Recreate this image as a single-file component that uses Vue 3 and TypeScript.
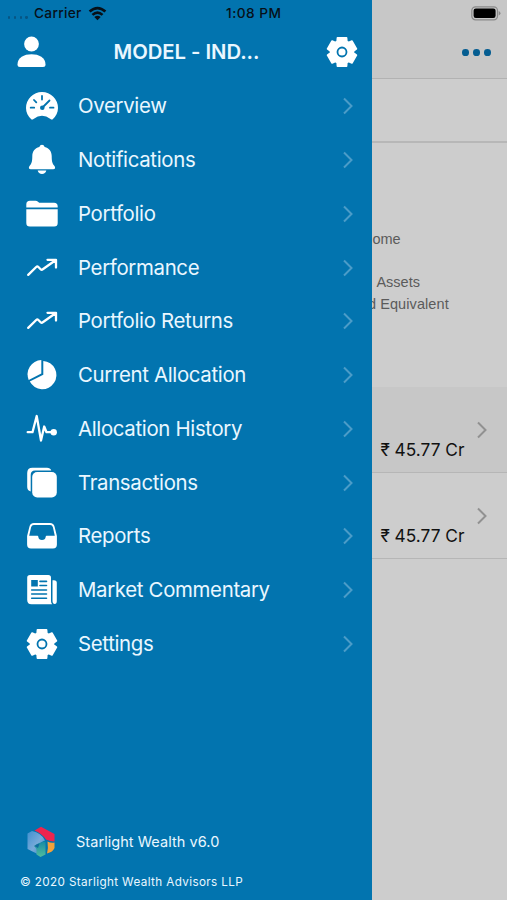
<script setup lang="ts">
type IconName = 'gauge' | 'bell' | 'folder' | 'trend' | 'pie' | 'pulse' | 'copy' | 'tray' | 'news' | 'gear'

interface MenuItem {
  label: string
  icon: IconName
}

const items: MenuItem[] = [
  { label: 'Overview', icon: 'gauge' },
  { label: 'Notifications', icon: 'bell' },
  { label: 'Portfolio', icon: 'folder' },
  { label: 'Performance', icon: 'trend' },
  { label: 'Portfolio Returns', icon: 'trend' },
  { label: 'Current Allocation', icon: 'pie' },
  { label: 'Allocation History', icon: 'pulse' },
  { label: 'Transactions', icon: 'copy' },
  { label: 'Reports', icon: 'tray' },
  { label: 'Market Commentary', icon: 'news' },
  { label: 'Settings', icon: 'gear' },
]

const amounts: string[] = ['₹ 45.77 Cr', '₹ 45.77 Cr']

// Six-toothed gear outline centred in a 32 x 32 box.
function gearPath(): string {
  const points: string[] = []
  for (let tooth = 0; tooth < 6; tooth++) {
    const corners: [number, number][] = [[-25, 11.6], [-18, 14.8], [18, 14.8], [25, 11.6]]
    for (const [offset, radius] of corners) {
      const a = ((tooth * 60 + offset - 90) * Math.PI) / 180
      points.push(`${(16 + radius * Math.cos(a)).toFixed(2)} ${(16 + radius * Math.sin(a)).toFixed(2)}`)
    }
  }
  return `M${points.join('L')}Z`
}
const gear = gearPath()
</script>

<template>
  <div class="screen">
    <aside class="drawer">
      <header class="profile">
        <svg class="person" viewBox="0 0 30 32">
          <circle cx="14.5" cy="8" r="7.4" />
          <path d="M.5 28.5C.5 21.500 7 18.300 14.500 18.300S28.500 21.500 28.500 28.500Q28.500 31 26 31H3Q.5 31 .5 28.500Z" />
        </svg>
        <h1>MODEL - IND...</h1>
        <svg class="icon" viewBox="0 0 32 32">
          <path :d="gear" class="rounded" />
          <circle cx="16" cy="16" r="4.5" class="cut-line" />
        </svg>
      </header>

      <nav>
        <a v-for="item in items" :key="item.label" class="item">
          <svg class="icon" viewBox="0 0 32 32">
            <template v-if="item.icon === 'gauge'">
              <path d="M5.500 29.500C2 26.500 0 22.600 0 18A16 16 0 0 1 32 18C32 22.600 30 26.500 26.500 29.500Q25.500 29.900 24.500 29Q16 22.500 7.500 29Q6.500 29.900 5.500 29.500Z" />
              <path class="cut-line" d="M16 6V9.500M8 10L10.300 12.400M4.700 17.700H8.200M24 17.700H27.500M17 17L23.500 10.500" />
              <circle class="cut" cx="16.300" cy="17.800" r="2.300" />
            </template>
            <template v-else-if="item.icon === 'bell'">
              <path d="M16 .7Q17.900 .7 18.700 2.900C23.300 4 25.700 7.500 25.700 12C25.700 18 26.500 19.500 28.300 21.800C29.900 24 28.800 25.200 27.500 25.200H4.500C3.200 25.200 2.100 24 3.700 21.800C5.500 19.500 6.300 18 6.300 12C6.300 7.500 8.700 4 13.300 2.900Q14.100 .7 16 .7Z" />
              <path d="M11.700 26.600H20.300C19.800 28.800 18.200 30 16 30S12.200 28.800 11.700 26.600Z" />
            </template>
            <template v-else-if="item.icon === 'folder'">
              <path d="M.3 9.600V6.500Q.3 2.800 4 2.800H9.500Q11 2.800 12 3.700L13.200 4.700H28Q31.700 4.700 31.700 8.400V9.600Z" />
              <path d="M.3 11.300H31.700V25Q31.700 28.500 28.200 28.500H3.800Q.3 28.500 .3 25Z" />
            </template>
            <path v-else-if="item.icon === 'trend'" class="line" d="M2.200 22.900L10.200 15Q11.300 14 12.400 15L14.600 17.200Q15.700 18.300 16.800 17.200L29.500 8.200M21.500 7.800H30V15.500" />
            <template v-else-if="item.icon === 'pie'">
              <path d="M15.300 1V14.600L2.700 20.900A14.300 14.300 0 0 1 15.300 1Z" />
              <path d="M17.300 2A14.100 14.100 0 1 1 3.800 22.600L17.300 15.800Z" />
            </template>
            <template v-else-if="item.icon === 'pulse'">
              <path class="line" d="M1.700 19.200H6.500L10.700 3L15 27.500L18.200 13.500L20.500 19.200H26" />
              <circle cx="27.700" cy="19.200" r="3.200" />
            </template>
            <template v-else-if="item.icon === 'copy'">
              <path d="M25.300 3.500H9Q4.700 3.500 4.700 8V24.500Q1.200 23.500 1.200 20V6Q1.200 .8 6.400 .8H21Q24.300 .8 25.300 3.500Z" />
              <rect x="6.200" y="5" width="24.600" height="25.500" rx="5" />
            </template>
            <path v-else-if="item.icon === 'tray'" fill-rule="evenodd" d="M8 3H24Q27.700 3 28.600 6.700L30.900 16V24.500Q30.900 28.500 27 28.500H5Q1.100 28.500 1.100 24.500V16L3.400 6.700Q4.300 3 8 3ZM7.800 5Q5.700 5 5.100 7.200L3.200 15.800H11.500Q12.200 15.800 12.300 16.700Q12.700 20 16 20T19.700 16.700Q19.800 15.800 20.500 15.800H28.800L26.900 7.200Q26.300 5 24.200 5Z" />
            <template v-else-if="item.icon === 'news'">
              <path d="M4 1H22.300Q25 1 25 3.700V27Q25 29.200 26.300 30.200H5.500Q1.200 30.200 1.200 26V3.700Q1.200 1 4 1Z" />
              <path d="M26.500 6.300H28Q30.800 6.300 30.800 9V27Q30.800 30 28.700 30T26.500 27Z" />
              <path class="cut" d="M5.200 6H11.800V12.500H5.200Z" />
              <path class="cut-line thin" d="M14 7.400H20.500M14 11.500H20.500M5.700 16H20.500M5.700 20H20.500M5.700 24.200H20.500" />
            </template>
            <template v-else>
              <path :d="gear" class="rounded" />
              <circle cx="16" cy="16" r="4.5" class="cut-line" />
            </template>
          </svg>
          <span class="label">{{ item.label }}</span>
          <svg class="chevron" viewBox="0 0 12 18"><path d="M2 1.500L9.500 9L2 16.500" /></svg>
        </a>
      </nav>

      <footer>
        <div class="brand">
          <svg class="logo" viewBox="0 0 28 32">
            <defs>
              <linearGradient id="sky" x1="0" y1="0" x2="1" y2="1">
                <stop offset="0" stop-color="#3f90cf" />
                <stop offset=".55" stop-color="#78aad9" />
                <stop offset="1" stop-color="#2986c3" />
              </linearGradient>
              <linearGradient id="leaf" x1="0" y1="0" x2="0" y2="1">
                <stop offset="0" stop-color="#168ba5" />
                <stop offset="1" stop-color="#52bd9c" />
              </linearGradient>
            </defs>
            <path fill="#ed254e" d="M7.500 4.500L14 .7L27.500 8V15.500Q23 15.500 19 13.500Q15 7.500 7.500 4.500Z" />
            <path fill="url(#sky)" d="M.5 7.500L5 5Q14 6.500 18 14.500Q12 17 9.500 21L10.500 28L.5 23Z" />
            <path fill="url(#leaf)" d="M18.500 15.500V28.500L13.500 31L9.500 28.500V23Q8 21 7 20Q12 16 18.500 15.500Z" />
            <path fill="#f3a13b" d="M20.500 15.500Q24 17.300 27.500 16.500V22Q26 26 20 27.500Q21.500 22 20.500 15.500Z" />
            <path fill="#126ba0" d="M7.500 20Q10 17.700 12.500 17.500L11 22Z" />
          </svg>
          <span>Starlight Wealth v6.0</span>
        </div>
        <p>© 2020 Starlight Wealth Advisors LLP</p>
      </footer>
    </aside>

    <main class="page">
      <div class="toolbar"><i /><i /><i /></div>
      <div class="tabs" />
      <div class="legend">
        <span>ome</span>
        <span class="assets">Assets</span>
        <span class="equiv">d Equivalent</span>
      </div>
      <div v-for="(amount, i) in amounts" :key="i" class="holding" :class="{ shaded: i === 0 }">
        <span>{{ amount }}</span>
        <svg class="chevron" viewBox="0 0 12 18"><path d="M2 1.500L9.500 9L2 16.500" /></svg>
      </div>
    </main>

    <div class="status">
      <span class="dots"><i /><i /><i /><i /></span>
      <span class="carrier">Carrier</span>
      <svg class="wifi" viewBox="0 0 18 14">
        <path d="M1.500 5.200Q9-1.600 16.500 5.200M4.200 8.300Q9 4 13.800 8.300" />
        <path class="wedge" d="M6 10.300Q9 7.900 12 10.300L9 13.500Z" />
      </svg>
      <span class="time">1:08 PM</span>
      <svg class="battery" viewBox="0 0 30 15">
        <rect class="shell" x=".8" y=".8" width="25.700" height="13" rx="3.700" />
        <rect x="2.600" y="2.500" width="22" height="9.500" rx="2.200" />
        <path class="tip" d="M27.700 5Q29.500 5.800 29.500 7.300T27.700 9.600Z" />
      </svg>
    </div>
  </div>
</template>

<style>
body {
  margin: 0;
  overflow: hidden;
}
</style>

<style scoped>
.screen {
  position: relative;
  display: flex;
  width: 507px;
  height: 900px;
  overflow: hidden;
  background: #cdcdcd;
  font-family: Inter, 'Liberation Sans', sans-serif;
}
.drawer {
  z-index: 1;
  display: flex;
  flex-direction: column;
  flex: none;
  width: 372.4px;
  box-sizing: border-box;
  padding-top: 25px;
  background: #0274af;
  color: #eaf7ff;
}
.profile {
  display: flex;
  align-items: center;
  height: 54.5px;
  padding: 0 14.400px 0 17px;
}
.person {
  width: 30px;
  height: 32px;
  fill: #fff;
}
h1 {
  flex: 1;
  margin: 0;
  text-align: center;
  font-size: 20.300px;
  font-weight: 600;
  letter-spacing: -0.05px;
  line-height: 54px;
}
.icon {
  flex: none;
  width: 32px;
  height: 32px;
  fill: #fff;
}
.rounded {
  stroke: #fff;
  stroke-width: 1.6;
  stroke-linejoin: round;
}
.cut {
  fill: #0274af;
}
.cut-line {
  fill: none;
  stroke: #0274af;
  stroke-width: 1.8;
  stroke-linecap: round;
}
circle.cut-line {
  fill: #fff;
}
.cut-line.thin {
  stroke-width: 1.6;
}
.line {
  fill: none;
  stroke: #fff;
  stroke-width: 2.3;
  stroke-linecap: round;
  stroke-linejoin: round;
}
nav {
  display: flex;
  flex-direction: column;
}
.item {
  display: flex;
  align-items: center;
  height: 53.75px;
  padding: 0 18.400px 0 26px;
}
.label {
  flex: 1;
  margin-left: 20px;
  font-size: 20.400px;
  letter-spacing: -0.33px;
  line-height: 26px;
}
.chevron {
  flex: none;
  width: 12px;
  height: 18px;
  fill: none;
  stroke: #4b9cc8;
  stroke-width: 2;
}
footer {
  margin-top: auto;
  height: 76px;
}
.brand {
  display: flex;
  align-items: center;
  gap: 21px;
  height: 36px;
  padding-left: 27px;
  font-size: 14.500px;
  letter-spacing: 0.05px;
}
.brand span {
  margin-top: -1px;
}
.logo {
  width: 28px;
  height: 32px;
}
footer p {
  margin: 14px 0 0 20px;
  font-size: 11.700px;
  line-height: 16px;
  letter-spacing: 0.38px;
}
.page {
  flex: 1;
  min-width: 0;
}
.toolbar {
  display: flex;
  justify-content: flex-end;
  gap: 4px;
  box-sizing: border-box;
  height: 79px;
  padding: 49px 16.500px 0 0;
  background: #c7c7c7;
  border-bottom: 1px solid #b2b2b2;
}
.toolbar i {
  width: 6.700px;
  height: 6.700px;
  border-radius: 50%;
  background: #055d91;
}
.tabs {
  box-sizing: border-box;
  height: 64px;
  border-bottom: 2px solid #b7b7b7;
}
.legend {
  display: flex;
  flex-direction: column;
  box-sizing: border-box;
  height: 244px;
  padding-top: 85px;
  color: #5b5b5b;
  font: 14.500px/22px 'Liberation Sans', Arial, sans-serif;
}
.assets {
  margin: 21px 0 0 4px;
}
.equiv {
  margin-left: -4.500px;
  letter-spacing: 0.09px;
}
.holding {
  display: flex;
  align-items: flex-start;
  box-sizing: border-box;
  height: 86px;
  border-bottom: 1px solid #b6b6b6;
  color: #111;
}
.holding.shaded {
  background: #c7c7c7;
}
.holding span {
  width: 96px;
  padding: 51px 0 0 8px;
  font-size: 17.300px;
  line-height: 24px;
  white-space: nowrap;
}
.holding .chevron {
  margin-top: 34px;
  stroke: #919191;
}
.status {
  position: absolute;
  z-index: 2;
  inset: 0 0 auto 0;
  display: flex;
  align-items: center;
  height: 26px;
  color: #071018;
  font-size: 13.700px;
  font-weight: 500;
}
.dots {
  display: flex;
  gap: 3.500px;
  width: 34px;
  padding: 9px 0 0 8px;
  box-sizing: border-box;
}
.dots i {
  width: 2.300px;
  height: 2.300px;
  border-radius: 50%;
  background: #075583;
}
.carrier {
  width: 54px;
  letter-spacing: 0.3px;
}
.wifi {
  width: 19px;
  height: 15px;
  fill: none;
  stroke: #071018;
  stroke-width: 2.500;
}
.wedge {
  fill: #071018;
  stroke: none;
}
.time {
  margin-left: 119px;
  letter-spacing: 0.45px;
}
.battery {
  width: 30px;
  height: 15px;
  margin-left: auto;
  margin-right: 6.500px;
}
.shell {
  fill: none;
  stroke: #8a8a8a;
  stroke-width: 1.200;
}
.tip {
  fill: #8a8a8a;
}
</style>
